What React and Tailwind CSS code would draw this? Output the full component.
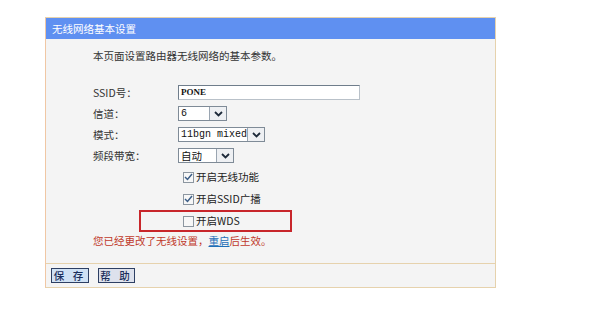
const cjk = { fontFamily: '"Noto Sans CJK SC", "Liberation Sans", sans-serif' }

function Arrow() {
  return (
    <span className="flex h-full w-[17px] items-center justify-center border-l border-[#9aa5b1] bg-[#eef0f3]">
      <svg width="9" height="6" viewBox="0 0 9 6">
        <path d="M1 1 L4.5 4.5 L8 1" fill="none" stroke="#1d2a3a" strokeWidth="1.8" />
      </svg>
    </span>
  )
}

function Select({ value, width, mono }) {
  return (
    <div
      className={`flex h-[15px] items-center border border-[#7f8b97] bg-white ${width}`}
    >
      <span
        className={`flex-1 pl-[2px] leading-[13px] text-[#111] ${mono ? 'text-[10px]' : 'text-[10.5px]'}`}
        style={mono ? { fontFamily: '"Liberation Mono", monospace' } : cjk}
      >
        {value}
      </span>
      <Arrow />
    </div>
  )
}

function Check({ checked, label }) {
  return (
    <div className="flex items-center gap-[2px]">
      <span className="flex h-[11px] w-[11px] items-center justify-center border border-[#8c96a0] bg-[#f7f7f7]">
        {checked && (
          <svg width="9" height="8" viewBox="0 0 9 8">
            <path d="M1 4 L3.5 6.5 L8 1" fill="none" stroke="#3b5d86" strokeWidth="1.5" />
          </svg>
        )}
      </span>
      <span className="text-[10.5px] leading-[14px] text-[#222]" style={cjk}>
        {label}
      </span>
    </div>
  )
}

function Row({ label, children }) {
  return (
    <div className="flex h-[21px] items-center">
      <span className="w-[85px] text-[10.5px] text-[#333]" style={cjk}>
        {label}
      </span>
      {children}
    </div>
  )
}

export default function App() {
  return (
    <div className="h-[317px] w-[600px] bg-white pl-[45px] pt-[17px]">
      <div className="w-[451px] border border-[#e6d2ad] border-l-[#f0c7a4]">
        <div
          className="flex h-[21px] items-center bg-[#5f90f1] pl-[6px] text-[10.5px] text-white"
          style={cjk}
        >
          无线网络基本设置
        </div>
        <div className="bg-[#f4f4f4] pb-[15px] pl-[47px] pt-[10px]">
          <div className="h-[14px] text-[10.5px] leading-[14px] text-[#333]" style={cjk}>
            本页面设置路由器无线网络的基本参数。
          </div>
          <div className="mt-[19px]">
            <Row label="SSID号：">
              <div className="flex h-[15px] w-[182px] items-center border border-[#6f7d8b] border-r-[#b9c1c9] border-b-[#b9c1c9] bg-white pl-[2px]">
                <span
                  className="text-[9px] font-bold leading-[13px] text-[#111]"
                  style={{ fontFamily: '"Liberation Serif", serif' }}
                >
                  PONE
                </span>
              </div>
            </Row>
            <Row label="信道：">
              <Select value="6" width="w-[49px]" mono />
            </Row>
            <Row label="模式：">
              <Select value="11bgn mixed" width="w-[87px]" mono />
            </Row>
            <Row label="频段带宽：">
              <Select value="自动" width="w-[56px]" />
            </Row>
          </div>
          <div>
            <div className="flex h-[22px] items-center pl-[90px]">
              <Check checked label="开启无线功能" />
            </div>
            <div className="flex h-[22px] items-center pl-[90px]">
              <Check checked label="开启SSID广播" />
            </div>
            <div className="ml-[46px] flex h-[22px] w-[153px] items-center border-2 border-[#c8262b] pl-[42px]">
              <Check label="开启WDS" />
            </div>
          </div>
          <div className="mt-[2px] text-[10.5px] leading-[14px] text-[#c0392b]" style={cjk}>
            您已经更改了无线设置，
            <span className="text-[#1f6fb8] underline">重启</span>
            后生效。
          </div>
        </div>
        <div className="flex h-[24px] items-center gap-[9px] border-t border-[#e6d2ad] bg-[#f4f4f4] pl-[5px]">
          <button
            className="h-[15px] w-[38px] border border-[#2d3f63] bg-[#cfe1f4] text-[10.5px] font-medium leading-[13px] tracking-[3px] text-[#1b2f5c]"
            style={cjk}
          >
            保 存
          </button>
          <button
            className="h-[15px] w-[37px] border border-[#2d3f63] bg-[#dde1ec] text-[10.5px] font-medium leading-[13px] tracking-[3px] text-[#1b2f5c]"
            style={cjk}
          >
            帮 助
          </button>
        </div>
      </div>
    </div>
  )
}
